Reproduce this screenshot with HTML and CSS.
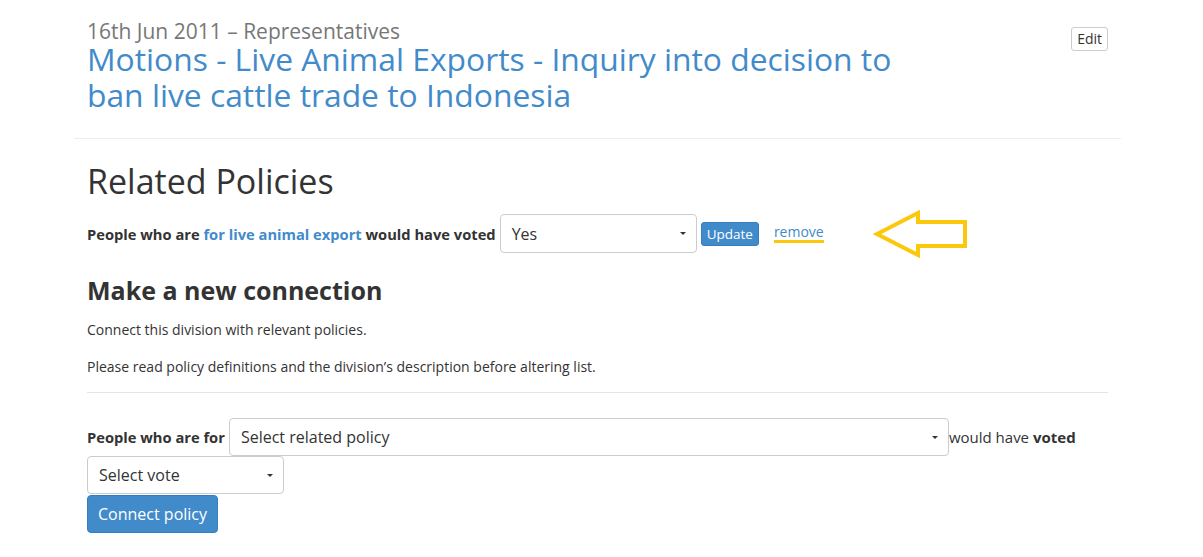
FILE: index.html
```html
<!DOCTYPE html>
<html>
<head>
<meta charset="utf-8">
<link rel="stylesheet" href="styles.css">
</head>
<body>
<div class="page">
  <header class="head">
    <div class="head-text">
      <div class="subtitle">16th Jun 2011 – Representatives</div>
      <h1 class="title">Motions - Live Animal Exports - Inquiry into decision to ban live cattle trade to Indonesia</h1>
    </div>
    <button class="btn-edit">Edit</button>
  </header>
  <hr class="rule-top">
  <section class="content">
    <h2 class="related">Related Policies</h2>
    <div class="policy-row">
      <span class="label">People who are <a class="link" href="#">for live animal export</a> would have voted</span>
      <div class="select sel-yes"><span>Yes</span><i class="caret"></i></div>
      <button class="btn-update">Update</button>
      <a class="remove" href="#">remove</a>
      <svg class="arrow" width="96" height="48" viewBox="0 0 96 48">
        <path d="M4 24 L45 3 L45 12 L92 12 L92 36 L45 36 L45 45 Z" fill="none" stroke="#fdc70c" stroke-width="4" stroke-linejoin="miter"/>
      </svg>
    </div>
    <h3 class="new">Make a new connection</h3>
    <p class="p1">Connect this division with relevant policies.</p>
    <p class="p2">Please read policy definitions and the division’s description before altering list.</p>
    <hr class="rule-mid">
    <div class="connect-row">
      <span class="label">People who are for</span>
      <div class="select sel-policy"><span>Select related policy</span><i class="caret"></i></div>
      <span class="label-light">would have <b>voted</b></span>
    </div>
    <div class="select sel-vote"><span>Select vote</span><i class="caret"></i></div>
    <button class="btn-connect">Connect policy</button>
  </section>
</div>
</body>
</html>
```
FILE: styles.css
```css
* { box-sizing: border-box; }
body {
  margin: 0;
  font-family: "Open Sans", "Noto Sans", sans-serif;
  color: #333;
  background: #fff;
}
.page {
  width: 1047px;
  margin-left: 74px;
}
.head {
  display: flex;
  justify-content: space-between;
  align-items: flex-start;
  padding: 21px 13px 0 13px;
}
.subtitle {
  font-size: 21px;
  line-height: 20px;
  color: #777;
}
.title {
  margin: 0;
  font-weight: 400;
  font-size: 31.8px;
  line-height: 36px;
  color: #428bca;
  width: 820px;
}
.btn-edit {
  margin-top: 6px;
  font-family: inherit;
  font-size: 14px;
  line-height: 18px;
  padding: 2px 5px;
  background: #fff;
  border: 1px solid #ccc;
  border-radius: 3px;
  color: #333;
}
.rule-top {
  margin: 25px 0 0 0;
  border: 0;
  border-top: 1px solid #eee;
}
.content {
  padding: 0 13px;
}
.related {
  margin: 22px 0 0 0;
  font-weight: 400;
  font-size: 34px;
  line-height: 40px;
}
.policy-row {
  display: flex;
  align-items: center;
  margin-top: 13px;
  height: 39px;
}
.label {
  font-weight: 700;
  font-size: 14.7px;
}
.link { color: #428bca; text-decoration: none; }
.select {
  display: flex;
  align-items: center;
  justify-content: space-between;
  height: 39px;
  border: 1px solid #ccc;
  border-radius: 4px;
  padding: 0 10px 0 11px;
  font-size: 16px;
  color: #333;
  background: #fff;
}
.caret {
  width: 0; height: 0;
  border-left: 3px solid transparent;
  border-right: 3px solid transparent;
  border-top: 3px solid #333;
}
.sel-yes { width: 197px; margin-left: 4px; }
.btn-update {
  margin-left: 4px;
  height: 24px;
  padding: 0 5px;
  font-family: inherit;
  font-size: 13.5px;
  color: #fff;
  background: #428bca;
  border: 1px solid #357ebd;
  border-radius: 3px;
}
.remove {
  margin-left: 15px;
  font-size: 14px;
  color: #428bca;
  text-decoration: none;
  border-bottom: 3px solid #fdc70c;
  line-height: 16px;
  padding-bottom: 0;
}
.arrow { margin-left: 49px; }
.new {
  margin: 21px 0 0 0;
  font-size: 25px;
  line-height: 32px;
  font-weight: 700;
}
.p1, .p2 {
  font-size: 14px;
  line-height: 18px;
  margin: 0;
}
.p1 { margin-top: 15px; }
.p2 { margin-top: 19px; }
.rule-mid {
  margin: 16px 0 0 0;
  border: 0;
  border-top: 1px solid #e5e5e5;
}
.connect-row {
  display: flex;
  align-items: center;
  margin-top: 25px;
}
.sel-policy { width: 720px; margin-left: 4px; height: 38px; }
.label-light { font-size: 15px; }
.label-light b { font-weight: 700; }
.sel-vote { width: 197px; height: 38px; }
.btn-connect {
  display: block;
  margin-top: 1px;
  height: 38px;
  padding: 0 10px;
  font-family: inherit;
  font-size: 16px;
  color: #fff;
  background: #428bca;
  border: 1px solid #357ebd;
  border-radius: 4px;
}
```
